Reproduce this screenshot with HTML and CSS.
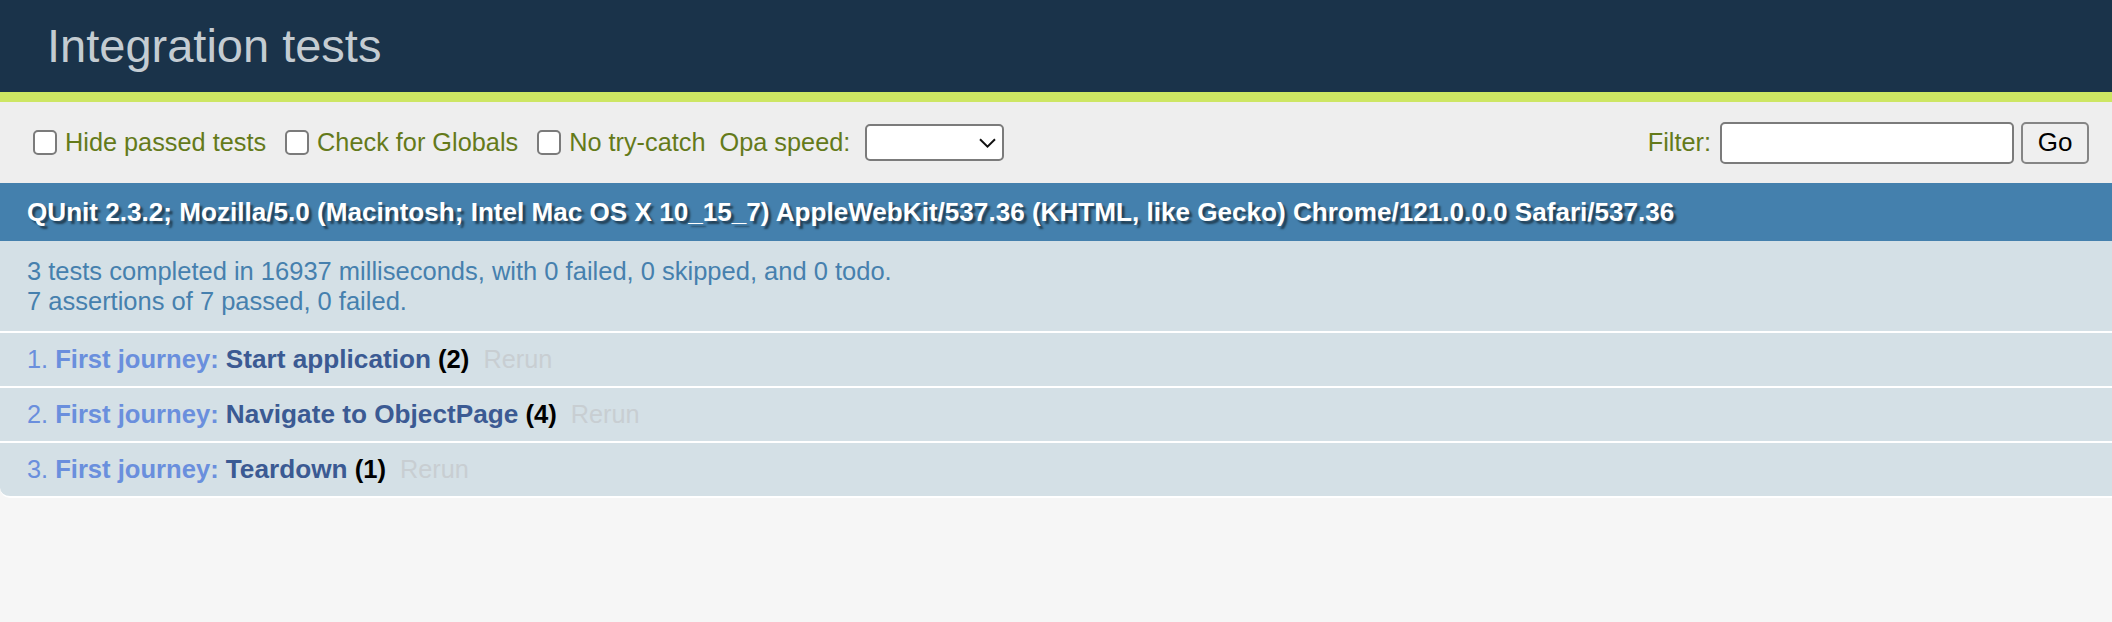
FILE: index.html
```html
<!DOCTYPE html>
<html lang="en">
<head>
<meta charset="utf-8">
<title>Integration tests</title>
<link rel="stylesheet" href="styles.css">
</head>
<body>
<div class="qunit">
  <h1 class="qunit-header">Integration tests</h1>
  <div class="qunit-banner"></div>
  <div class="toolbar">
    <div class="toolbar-left">
      <label class="check"><input type="checkbox" class="cb">Hide passed tests</label>
      <label class="check"><input type="checkbox" class="cb">Check for Globals</label>
      <label class="check last"><input type="checkbox" class="cb">No try-catch</label>
      <label class="speed">Opa speed:
        <span class="select-wrap">
          <select class="select"><option></option></select>
          <svg class="chevron" width="17" height="10" viewBox="0 0 17 10"><path d="M1 1.2 L8.5 8.6 L16 1.2" fill="none" stroke="#111" stroke-width="2"/></svg>
        </span>
      </label>
    </div>
    <div class="toolbar-right">
      <label class="filter">Filter: <input type="text" class="filter-input"></label>
      <button class="go" type="button">Go</button>
    </div>
  </div>
  <h2 class="user-agent">QUnit 2.3.2; Mozilla/5.0 (Macintosh; Intel Mac OS X 10_15_7) AppleWebKit/537.36 (KHTML, like Gecko) Chrome/121.0.0.0 Safari/537.36</h2>
  <p class="testresult">3 tests completed in 16937 milliseconds, with 0 failed, 0 skipped, and 0 todo.<br>7 assertions of 7 passed, 0 failed.</p>
  <ol class="tests">
    <li class="pass"><strong><span class="module-name">First journey</span>: <span class="test-name">Start application</span> <b class="counts">(2)</b></strong> <a class="rerun">Rerun</a></li>
    <li class="pass"><strong><span class="module-name">First journey</span>: <span class="test-name">Navigate to ObjectPage</span> <b class="counts">(4)</b></strong> <a class="rerun">Rerun</a></li>
    <li class="pass last-test"><strong><span class="module-name">First journey</span>: <span class="test-name">Teardown</span> <b class="counts">(1)</b></strong> <a class="rerun">Rerun</a></li>
  </ol>
</div>
</body>
</html>
```
FILE: styles.css
```css
html, body {
  margin: 0;
  padding: 0;
  background: #f6f6f6;
}

.qunit {
  font-family: "Liberation Sans", Arial, Helvetica, sans-serif;
}

.qunit-header {
  margin: 0;
  padding: 23px 0 23px 47px;
  font-size: 47px;
  line-height: 46px;
  font-weight: 400;
  color: #c4ccd2;
  background: #1a334a;
}

.qunit-banner {
  height: 10px;
  background: #cde663;
}

.toolbar {
  display: flex;
  justify-content: space-between;
  align-items: center;
  height: 81px;
  box-sizing: border-box;
  padding: 0 23px 0 33px;
  background: #eeeeee;
  color: #647a1a;
  font-size: 25.3px;
}

.toolbar-left,
.toolbar-right {
  display: flex;
  align-items: center;
}

.check {
  display: flex;
  align-items: center;
  margin-right: 19px;
}

.check.last {
  margin-right: 14px;
}

.cb {
  appearance: none;
  -webkit-appearance: none;
  box-sizing: border-box;
  width: 24px;
  height: 25px;
  margin: 0 8px 0 0;
  border: 2px solid #7b7b7b;
  border-radius: 5px;
  background: #ffffff;
}

.speed {
  display: flex;
  align-items: center;
}

.select-wrap {
  position: relative;
  display: inline-block;
  margin-left: 15px;
  height: 37px;
}

.select {
  appearance: none;
  -webkit-appearance: none;
  box-sizing: border-box;
  width: 139px;
  height: 37px;
  margin: 0;
  border: 2px solid #7b7b7b;
  border-radius: 5px;
  background: #ffffff;
  font-size: 20px;
}

.chevron {
  position: absolute;
  right: 8px;
  top: 14px;
}

.filter {
  display: flex;
  align-items: center;
}

.filter-input {
  box-sizing: border-box;
  width: 294px;
  height: 42px;
  margin: 0 0 0 9px;
  padding: 0 8px;
  border: 2px solid #7b7b7b;
  border-radius: 5px;
  background: #ffffff;
  font-size: 24px;
}

.go {
  box-sizing: border-box;
  width: 68px;
  height: 42px;
  margin-left: 7px;
  padding: 0;
  border: 2px solid #858585;
  border-radius: 5px;
  background: #efefef;
  color: #000000;
  font-family: "Liberation Sans", Arial, sans-serif;
  font-size: 26px;
}

.user-agent {
  margin: 0;
  padding: 13px 27px;
  font-size: 26.1px;
  line-height: 32px;
  font-weight: 700;
  color: #ffffff;
  background: #4480ad;
  text-shadow: rgba(0, 0, 0, 0.5) 3px 3px 2px;
  white-space: nowrap;
}

.testresult {
  margin: 0;
  padding: 15px 27px;
  font-size: 25.5px;
  line-height: 30px;
  color: #4680ae;
  background: #d4e0e6;
  border-bottom: 2px solid #ffffff;
}

.tests {
  margin: 0;
  padding: 0;
  list-style-position: inside;
  font-size: 25.3px;
}

.tests li {
  padding: 10px 27px;
  line-height: 33px;
  border-bottom: 2px solid #ffffff;
}

.tests li.pass {
  color: #6a8fdd;
  background: #d4e0e6;
}

.tests li.last-test {
  border-bottom-left-radius: 10px;
}

.tests strong {
  font-size: 25.6px;
}

.module-name {
  color: #6a8fdd;
}

.test-name {
  color: #3b5a93;
  font-size: 26.2px;
}

.counts {
  color: #000000;
}

.rerun {
  padding-left: 7px;
  color: #c8ced2;
  text-decoration: none;
}
```
